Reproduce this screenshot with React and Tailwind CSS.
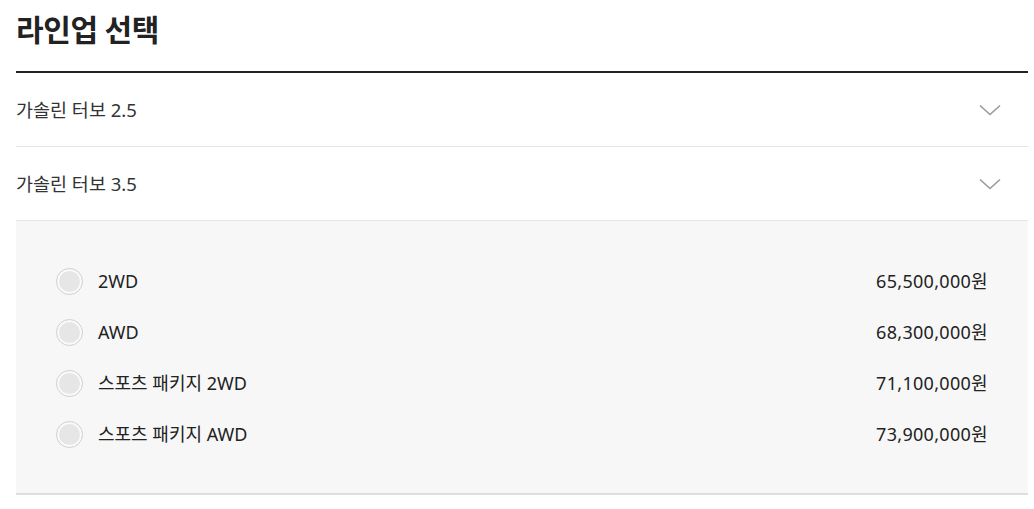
import { useState } from "react"

const lineups = [
    { name: "가솔린 터보 2.5", options: [] },
    {
        name: "가솔린 터보 3.5",
        options: [
            { label: "2WD", price: "65,500,000원" },
            { label: "AWD", price: "68,300,000원" },
            { label: "스포츠 패키지 2WD", price: "71,100,000원" },
            { label: "스포츠 패키지 AWD", price: "73,900,000원" },
        ],
    },
]

const Chevron = () => (
    <svg width="22" height="12" viewBox="0 0 22 12" fill="none">
        <path d="M1 1.5 L11 10.5 L21 1.5" stroke="#9a9a9a" strokeWidth="1.6" />
    </svg>
)

const App = () => {
    const [open, setOpen] = useState(1)
    const [selected, setSelected] = useState(null)

    return (
        <div className="px-4 pt-[6px] bg-white text-[#222]" style={{ fontFamily: '"Noto Sans", "Noto Sans CJK KR", sans-serif' }}>
            <h2 className="text-[30px] font-bold leading-[44px] tracking-[-0.3px] pb-[21px]" style={{ fontFamily: '"Noto Sans CJK KR", sans-serif' }}>라인업 선택</h2>
            <div className="border-t-2 border-[#222] w-[1012px]">
                {lineups.map((item, i) => (
                    <div key={item.name}>
                        <button
                            className="w-full flex items-center justify-between h-[74px] border-b border-[#e5e5e5] pr-[27px] text-left"
                            onClick={() => setOpen(open === i ? -1 : i)}
                        >
                            <span className="text-[18.5px] text-[#333]">{item.name}</span>
                            <Chevron />
                        </button>
                        {open === i && item.options.length > 0 && (
                            <div className="bg-[#f7f7f7] border-b-2 border-[#dedede] pl-10 pr-10 pt-[47px] pb-[46px] flex flex-col gap-[25px]">
                                {item.options.map((opt, j) => (
                                    <label key={opt.label} className="flex items-center justify-between h-[26px] cursor-pointer" onClick={() => setSelected(j)}>
                                        <div className="flex items-center gap-[15px]">
                                            <span className="w-[27px] h-[27px] rounded-full border border-[#cfcfcf] bg-[#fafafa] flex items-center justify-center">
                                                <span className={`w-[21px] h-[21px] rounded-full ${selected === j ? "bg-[#333]" : "bg-[#e6e6e6]"}`} />
                                            </span>
                                            <span className="text-[18px] text-[#222]">{opt.label}</span>
                                        </div>
                                        <span className="text-[18px] text-[#222] tracking-[0.3px]">{opt.price}</span>
                                    </label>
                                ))}
                            </div>
                        )}
                    </div>
                ))}
            </div>
        </div>
    )
}

export default App
